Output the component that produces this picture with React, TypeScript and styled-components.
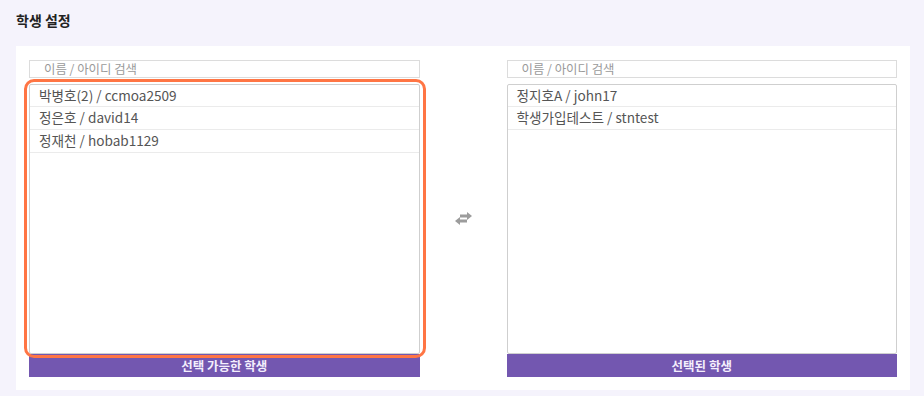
import styled, { createGlobalStyle } from "styled-components";

const GlobalStyle = createGlobalStyle`
	html, body {
		margin: 0;
		padding: 0;
		background: #f5f3fc;
		font-family: "Noto Sans CJK KR", "Noto Sans", sans-serif;
	}
`;

const Page = styled.div`
	padding: 10px 14px 6px 16px;
`;

const Title = styled.h2`
	margin: 0 0 16px;
	font-size: 14px;
	font-weight: 700;
	line-height: 20px;
	color: #222;
`;

const Panel = styled.section`
	background: #fff;
	padding: 14px 13px 13px;
	display: grid;
	grid-template-columns: 1fr 87px 1fr;
`;

const Column = styled.div`
	display: flex;
	flex-direction: column;
`;

const Search = styled.input`
	box-sizing: border-box;
	height: 18px;
	width: 100%;
	margin: 0 0 6px;
	border: 1px solid #dcdcdc;
	padding: 0 14px;
	font-family: inherit;
	font-size: 12.4px;
	color: #333;
	outline: none;
	&::placeholder {
		color: #9a9a9a;
	}
`;

const ListWrap = styled.div`
	position: relative;
`;

const Highlight = styled.div`
	position: absolute;
	left: -5px;
	right: -6px;
	top: -5px;
	bottom: -4px;
	border: 3px solid #ff7544;
	border-radius: 10px;
	pointer-events: none;
`;

const List = styled.ul`
	box-sizing: border-box;
	height: 270px;
	margin: 0;
	padding: 0;
	list-style: none;
	border: 1px solid #cfcfcf;
	border-radius: 2px;
	overflow: hidden;
`;

const Item = styled.li`
	height: 22px;
	line-height: 21px;
	padding: 0 9px;
	border-bottom: 1px solid #ebebeb;
	font-size: 13.6px;
	color: #555;
	white-space: nowrap;
	&:first-child {
		height: 21px;
	}
`;

const Footer = styled.div`
	height: 23px;
	line-height: 23px;
	background: #7357b0;
	color: #f3eefc;
	text-align: center;
	font-size: 12.5px;
	font-weight: 700;
`;

const Middle = styled.div`
	display: flex;
	align-items: center;
	justify-content: center;
	svg {
		width: 19px;
		height: 13px;
		fill: #9c9c9c;
	}
`;

interface IStudent {
	name: string;
	id: string;
}

const available: IStudent[] = [
	{ name: "박병호(2)", id: "ccmoa2509" },
	{ name: "정은호", id: "david14" },
	{ name: "정재천", id: "hobab1129" },
];

const selected: IStudent[] = [
	{ name: "정지호A", id: "john17" },
	{ name: "학생가입테스트", id: "stntest" },
];

function ExchangeIcon() {
	return (
		<svg viewBox="0 0 19 13">
			<polygon points="6,2.5 13,2.5 13,0 18,4 13,8 13,5.5 6,5.5" />
			<polygon points="13,7.5 6,7.5 6,5 1,9 6,13 6,10.5 13,10.5" />
		</svg>
	);
}

function StudentList({ students, label, highlight }: { students: IStudent[]; label: string; highlight?: boolean }) {
	return (
		<Column>
			<Search placeholder="이름 / 아이디 검색" />
			<ListWrap>
				<List>
					{students.map((s) => (
						<Item key={s.id}>{s.name} / {s.id}</Item>
					))}
				</List>
				{highlight && <Highlight />}
			</ListWrap>
			<Footer>{label}</Footer>
		</Column>
	);
}

export default function App() {
	return (
		<Page>
			<GlobalStyle />
			<Title>학생 설정</Title>
			<Panel>
				<StudentList students={available} label="선택 가능한 학생" highlight />
				<Middle>
					<ExchangeIcon />
				</Middle>
				<StudentList students={selected} label="선택된 학생" />
			</Panel>
		</Page>
	);
}
